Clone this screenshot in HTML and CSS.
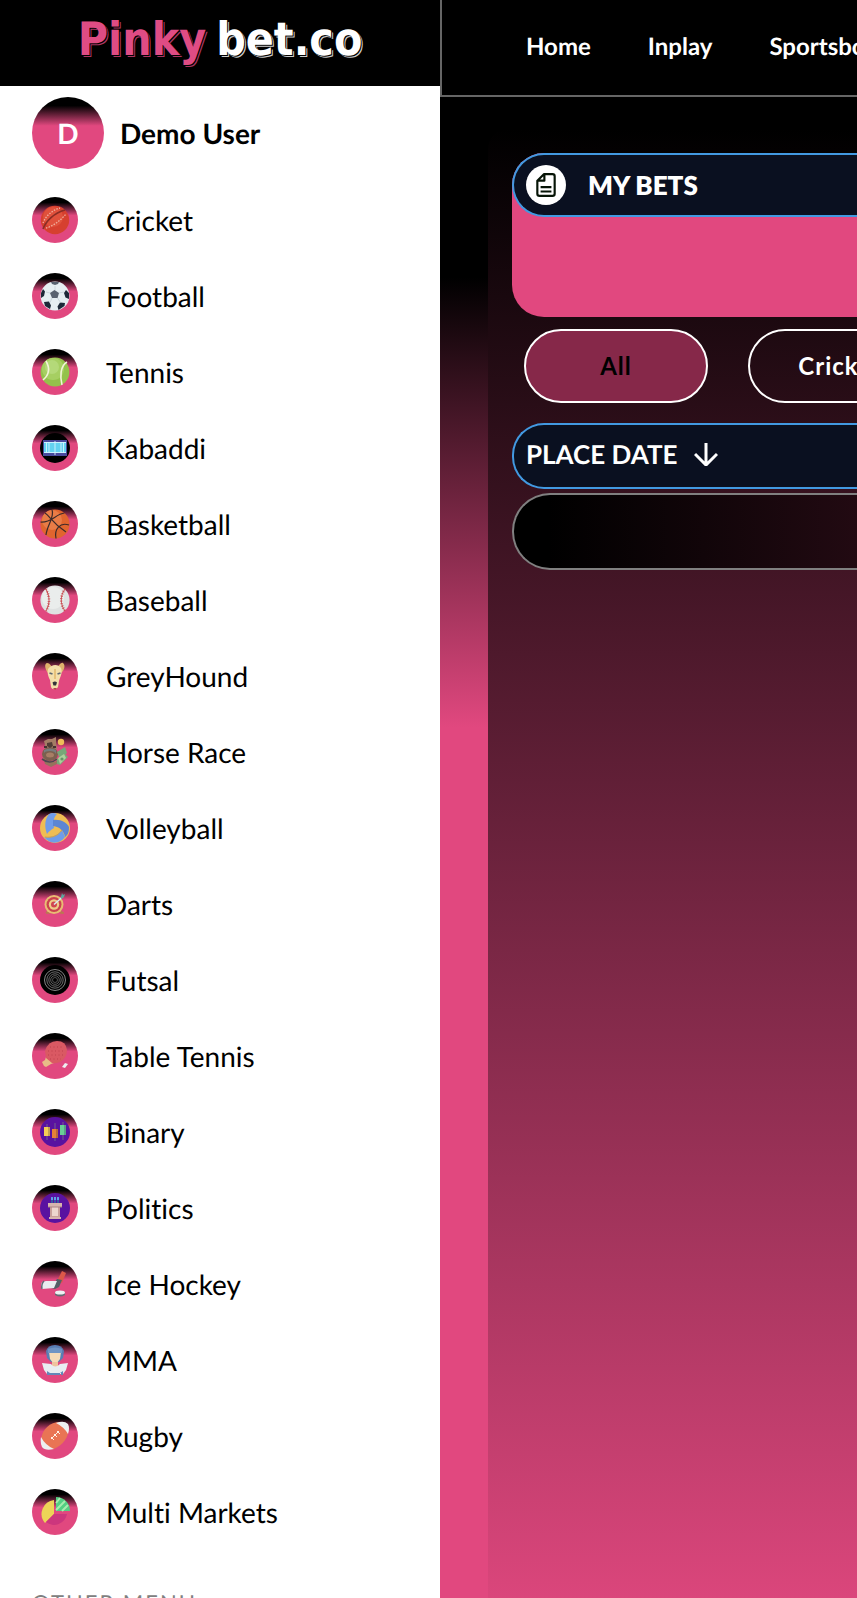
FILE: index.html
```html
<!DOCTYPE html>
<html lang="en">
<head>
<meta charset="utf-8">
<meta name="viewport" content="width=device-width, initial-scale=1">
<title>Pinkybet.co</title>
<link rel="stylesheet" href="styles.css">
</head>
<body>
<div class="app">
  <aside class="sidebar">
    <a class="logo" href="#"><span class="logo-pink">Pinky</span><span class="logo-white">bet.co</span></a>
    <div class="user">
      <span class="avatar">D</span>
      <span class="user-name">Demo User</span>
    </div>
    <nav class="sports" aria-label="Sports">
      <a class="sport" href="#"><span class="badge"><svg viewBox="0 0 30 30"><circle cx="15" cy="15" r="14.2" fill="#d6402f"/><circle cx="13" cy="12" r="10" fill="#e0513c"/><path d="M3 24C6 16 14 8 25 5" fill="none" stroke="#8a2d25" stroke-width="1.600"/><path d="M3 18C5 12 12 5 20 3M6 23C12 22 21 15 26 9" fill="none" stroke="#f0b0a0" stroke-width="1.300" stroke-dasharray="1.5 1.3"/></svg></span>Cricket</a>
      <a class="sport" href="#"><span class="badge"><svg viewBox="0 0 30 30"><circle cx="15" cy="15" r="14.4" fill="#e6eef2"/><path d="M14.500 9l4.500 3-1.500 5h-5.500l-2-5z" fill="#596270"/><path d="M11 1h8l-1 2-3 1-3-1z" fill="#596270"/><path d="M1 12l2-4 2 2.500-1 4.500-3 2zM29 12l-3-3-2 3 1.500 4.500 3.500 1.500zM4 21l5-.5 2 4-1 3.500-5-3zM25 22l-5-.5-2.500 4 1 3.500 6-4z" fill="#1d2838"/><path d="M15 5v4M19 12l5-1M17.500 17l3 4.500M12 17l-2 4.500M10 12l-4-1" stroke="#c5d0d8" stroke-width=".8"/></svg></span>Football</a>
      <a class="sport" href="#"><span class="badge"><svg viewBox="0 0 30 30"><circle cx="15" cy="15" r="14.4" fill="#94c24b"/><circle cx="13" cy="12" r="11" fill="#a6cf62"/><circle cx="12" cy="10" r="7" fill="#b4d979"/><path d="M6 4c4 7 3 14-3 19M27 5c-7 4-7 15-5 23" fill="none" stroke="#f2f4d8" stroke-width="1.600"/></svg></span>Tennis</a>
      <a class="sport" href="#"><span class="badge"><svg viewBox="0 0 30 30"><circle cx="15" cy="15" r="15"/><path d="M3 7h24v16H3z" fill="#4a4a9d"/><path d="M4 9h22v11H4z" fill="#63d2f0"/><path d="M4 9.500h22M4 19.500h22M15 8v14M6.500 9v11M9 9v11M21 9v11M23.500 9v11" stroke="#d5f5ff" stroke-width=".9"/></svg></span>Kabaddi</a>
      <a class="sport" href="#"><span class="badge"><svg viewBox="0 0 30 30"><circle cx="15" cy="15" r="14.600" fill="#e0652e"/><circle cx="12" cy="11" r="10" fill="#e97c46"/><path d="M.5 13c11 1 15-8 24-9M5 4c5 3 7 10 21 19M12 .8C15 8 7 16 6 26M29 16c-9-3-15 4-13 13.500" fill="none" stroke="#3c2a2a" stroke-width="1.200"/></svg></span>Basketball</a>
      <a class="sport" href="#"><span class="badge"><svg viewBox="0 0 30 30"><circle cx="15" cy="15" r="14.600" fill="#dfe2e2"/><circle cx="13" cy="13" r="11" fill="#eaedec"/><path d="M6 4c4 8 4 15 0 22M25 4c-5 7-5 15 0 22" fill="none" stroke="#c94a50" stroke-width="1"/><path d="M6 4c4 8 4 15 0 22M25 4c-5 7-5 15 0 22" fill="none" stroke="#c94a50" stroke-width="2.600" stroke-dasharray=".7 1.800"/></svg></span>Baseball</a>
      <a class="sport" href="#"><span class="badge"><svg viewBox="0 0 30 30"><path d="M8 12C5 8 4 3 7 2c3 0 4 3 5 4h6c1-2 3-5 5-4 3 2 1 8-2 10z" fill="#dfb36c"/><path d="M8 8c4-5 10-5 13-1 2 5-1 9-2 13l-1 6c-2 3-6 3-7 0l-1-7C8 15 7 12 8 8z" fill="#f3dfaa"/><path d="M14 8h2v10h-2z" fill="#e6c27b"/><path d="M9.500 12l3 1M20.500 12l-3 1" stroke="#5f6870" stroke-width="1.800"/><path d="M12.500 21.500q2.500-2 4.500 0l-1 3h-2.500z" fill="#343338"/><path d="M13 27h4l-2 2z" fill="#ae4b4b"/></svg></span>GreyHound</a>
      <a class="sport" href="#"><span class="badge"><svg viewBox="0 0 30 30"><path d="M4 4l4-2 4 0 4-2v5l1 7-4 3H6l-1-7z" fill="#a47d65"/><ellipse cx="10" cy="17" rx="8" ry="7" fill="#7b604f"/><path d="M3 20l5 5h7l4-4-2 6-6 3-6-3z" fill="#96735d"/><path d="M7 6l5-1 1 4-3 2-3-2z" fill="#513c35"/><path d="M4 13q6-3 12 0v4q-1-3-6-3t-6 2z" fill="#777c7e"/><path d="M2 22q8 6 15 0" fill="none" stroke="#4d4650" stroke-width="1.600"/><ellipse cx="10" cy="18" rx="4" ry="2.500" fill="#a87e65"/><path d="M4 10h3M13 10h3" stroke="#443331" stroke-width="2"/><circle cx="21" cy="5" r="3.200" fill="#efbd58"/><path d="M17 15l8-5 2 6-7 6zM17 22l7-6 4 4-8 8-3-1z" fill="#77a878"/><path d="M18 21l6-4 2 4-6 6z" fill="#add09c"/><circle cx="22" cy="22" r="1.600" fill="#669568"/></svg></span>Horse Race</a>
      <a class="sport" href="#"><span class="badge"><svg viewBox="0 0 30 30"><circle cx="15" cy="15" r="15" fill="#efbd54"/><path d="M9 1Q13-1 17 1c-4 4-4 9-3 14-3 2-5 3-7 6C4 13 5 6 9 1z" fill="#6f9cea"/><path d="M13 7c8-1 14 3 16 7 0 5-1 8-4 10-1-6-5-10-12-11z" fill="#5c86d3"/><path d="M4 24c8 1 14-2 18-7l3 7c-5 7-15 8-21 0z" fill="#6f9cea"/><path d="M22 17c-4 6-10 8-17 7" fill="none" stroke="#d4a244"/></svg></span>Volleyball</a>
      <a class="sport" href="#"><span class="badge"><svg viewBox="0 0 30 30"><path d="M8 22l-2 2M21 22l2 2M6 24h4M20 24h4" stroke="#b87a50" stroke-width="1.500"/><circle cx="14" cy="15.500" r="9.500" fill="#e8bc73"/><circle cx="14" cy="15.500" r="7.500" fill="#ca414e"/><circle cx="14" cy="15.500" r="5.200" fill="#eecb88"/><circle cx="14" cy="15.500" r="3" fill="#cf4550"/><path d="M14 15.500l9-8" stroke="#d9edf0" stroke-width="1.500"/><path d="M21 8l1-4 1 2 2-1-1 3-3 2z" fill="#59a79c"/></svg></span>Darts</a>
      <a class="sport" href="#"><span class="badge"><svg viewBox="0 0 30 30"><circle cx="15" cy="15" r="15"/><g fill="none" stroke="#858585"><circle cx="15" cy="15" r="10.500"/><circle cx="15" cy="15" r="8.200" stroke-width=".8"/><circle cx="15" cy="15" r="6.200" stroke-width=".8"/><circle cx="15" cy="15" r="4.300" stroke-width=".7"/><circle cx="15" cy="15" r="2.500" stroke-width=".6"/></g></svg></span>Futsal</a>
      <a class="sport" href="#"><span class="badge"><svg viewBox="0 0 30 30"><path d="M6 16l8 6-3 1-5 3-2-1-2-4 3-2z" fill="#e8bc87"/><path d="M6 17L5 10Q8 0 17 0q9 0 10 9 0 8-7 12-5 2-8 1z" fill="#da5963"/><g stroke="#be424e" stroke-width="1" stroke-dasharray="1 2.500"><path d="M10 6h13M8 10h17M8 14h17M10 18h11"/></g><path d="M22 26l3-4 3 1-3 4z" fill="#eceff1"/></svg></span>Table Tennis</a>
      <a class="sport" href="#"><span class="badge"><svg viewBox="0 0 30 30"><circle cx="15" cy="15" r="15" fill="#5912a0"/><path d="M7 7v16M15 6v18M23 5v18" stroke="#77608c" stroke-width="1"/><path d="M4 10h6v9H4z" fill="#f4ce55"/><path d="M12 12h6v9h-6z" fill="#e68238"/><path d="M20 8h6v10h-6z" fill="#69cf97"/><path d="M9 10v9M17 12v9M25 8v10" stroke="#2b174c" stroke-opacity=".25" stroke-width="2"/></svg></span>Binary</a>
      <a class="sport" href="#"><span class="badge"><svg viewBox="0 0 30 30"><circle cx="15" cy="15" r="15" fill="#5912a0"/><path d="M12 5v6M15 4v7M18 5v6" stroke="#248aa3" stroke-width="1.200"/><path d="M12 4v3M15 4v3M18 4v3" stroke="#67baff" stroke-width="1.500"/><path d="M8 10h14v4H8zM9 24h12v2H9z" fill="#d7b5ad"/><path d="M10 14h10v10H10z" fill="#c9a09b"/><path d="M12 14h6v9h-6z" fill="#edd6ce"/><path d="M8 14h14" stroke="#a98084"/></svg></span>Politics</a>
      <a class="sport" href="#"><span class="badge"><svg viewBox="0 0 30 30"><path d="M22 2l4 2-4 10-5-2z" fill="#dc5849"/><path d="M17 10l5 1-3 7-4 2-4-1z" fill="#555e66"/><path d="M2 13q-2 4 0 7l12-1 3-7H6z" fill="#e9edf0"/><path d="M4 12q-3 3-2 8" fill="none" stroke="#626973" stroke-width="1.500"/><path d="M15 23v3q5 3 10 0v-3z" fill="#626b72"/><ellipse cx="20" cy="23.500" rx="5" ry="2" fill="#eef1f3"/></svg></span>Ice Hockey</a>
      <a class="sport" href="#"><span class="badge"><svg viewBox="0 0 30 30"><path d="M6 6Q8 0 15 0t9 6l-1 7-4 4h-8l-4-4z" fill="#587eb3"/><path d="M9 7h12l-1 7-3 4h-4l-3-4z" fill="#f6dab7"/><path d="M8 4q7-3 14 0v4H8z" fill="#6f94c4"/><path d="M12 17h6v5h-6z" fill="#eec39f"/><path d="M2 18l9 1q4 5 9 0l8-1-2 7-3 4H7l-3-4z" fill="#e8edf1"/><path d="M7 26l3 2v2H7zM23 26l-3 2v2h3zM9 28h12v2H9z" fill="#6388b9"/></svg></span>MMA</a>
      <a class="sport" href="#"><span class="badge"><svg viewBox="0 0 30 30"><path d="M1 19C2 8 10 1 20 1q5 0 9 5c0 10-6 18-15 22-6 1-10-2-13-5z" fill="#e97454"/><path d="M16 2q8-3 12 1 2 4 0 10-4-7-12-11zM1 16q4 8 13 12-9 2-12-2-2-4-1-10z" fill="#edf0f1"/><path d="M11 18l8-8M11 16l3 3M14 13l3 3M17 10l3 3" stroke="#fff1e5" stroke-width="1"/></svg></span>Rugby</a>
      <a class="sport" href="#"><span class="badge"><svg viewBox="0 0 30 30"><path d="M14 3v14L5 26A14 14 0 0 1 14 3z" fill="#edd357"/><path d="M14 17h13A13 13 0 0 1 6 25z" fill="#cc367d"/><path d="M16 0v14h14A14 14 0 0 0 16 0z" fill="#53cf83"/><path d="M16 6l4-5M16 13l9-9M22 14l6-6" stroke="#a7ecaf" stroke-width="2"/></svg></span>Multi Markets</a>
    </nav>
    <h2 class="menu-title">OTHER MENU</h2>
  </aside>

  <div class="page">
    <header class="topbar">
      <nav class="topnav" aria-label="Main">
        <a href="#">Home</a><a href="#">Inplay</a><a href="#">Sportsbook</a>
      </nav>
    </header>
    <main class="content">
      <section class="panel">
        <div class="bets-card">
          <div class="bar bets-head">
            <span class="bets-icon"><svg viewBox="0 0 24 24" fill="none" stroke="#061406" stroke-width="2" stroke-linejoin="round"><path d="M10 2H18a2 2 0 0 1 2 2v16a2 2 0 0 1-2 2H6a2 2 0 0 1-2-2V8zM10.500 2v6H4M7 14h10M7 18h10"/></svg></span>
            <h1>MY BETS</h1>
          </div>
        </div>
        <div class="filters">
          <button class="pill active" type="button">All</button>
          <button class="pill" type="button">Cricket</button>
        </div>
        <div class="bar sort-bar">
          <button class="sort" type="button">PLACE DATE <svg viewBox="0 0 24 24" fill="none" stroke="#fff" stroke-width="3"><path d="M12 1v22M1 12l11 11 11-11"/></svg></button>
        </div>
        <div class="empty-row"></div>
      </section>
    </main>
  </div>
</div>
</body>
</html>
```
FILE: styles.css
```css
:root {
  --pink: #e1487f;
  --navy: #0a1020;
  --blue: #4299e1;
  --fade: linear-gradient(180deg, #000 12%, var(--pink) 40%);
}

* { box-sizing: border-box; }

body {
  margin: 0;
  font-family: Lato, "Open Sans", sans-serif;
  font-variant-ligatures: none;
  text-rendering: geometricPrecision;
  color: #000;
  background: #fff;
}

a { color: inherit; text-decoration: none; }

.app {
  display: flex;
  height: 100vh;
  overflow: hidden;
}

.sidebar {
  flex: 0 0 440px;
  overflow: hidden;
  background: #fff;
}

.logo {
  display: flex;
  justify-content: center;
  align-items: center;
  gap: 10px;
  height: 86px;
  padding-bottom: 8px;
  background: #000;
  font: bold 46px/1 "DejaVu Sans Condensed", sans-serif;
}

.logo-pink {
  color: #df4c84;
  text-shadow: 1px 1px #000, 2px 2px #a93662;
}

.logo-white {
  color: #fff;
  text-shadow: 1px 1px #000, 2px 2px #ccc;
}

.user {
  display: flex;
  align-items: center;
  gap: 16px;
  padding: 11px 32px 28px;
}

.avatar {
  display: flex;
  justify-content: center;
  align-items: center;
  width: 72px;
  height: 72px;
  border-radius: 50%;
  background: var(--fade);
  color: #fff;
  font-size: 28px;
  font-weight: 700;
}

.user-name {
  font-size: 28px;
  font-weight: 700;
}

.sports {
  display: flex;
  flex-direction: column;
  gap: 30px;
  padding: 0 32px;
}

.sport {
  display: flex;
  align-items: center;
  gap: 28px;
  height: 46px;
  font-size: 28px;
}

.badge {
  flex: none;
  padding: 8px;
  width: 46px;
  height: 46px;
  border-radius: 50%;
  background: var(--fade);
}

.badge svg { display: block; }

.menu-title {
  margin: 52px 32px 0;
  color: #808080;
  font-size: 22px;
  font-weight: 400;
  line-height: 32px;
  letter-spacing: 2px;
}

.page {
  flex: 1;
  min-width: 0;
  display: flex;
  flex-direction: column;
  overflow: hidden;
  background: #000;
}

.topbar {
  flex: none;
  height: 97px;
  border-left: 2px solid #666;
  border-bottom: 2px solid #666;
  background: #000;
}

.topnav {
  display: flex;
  align-items: center;
  gap: 57px;
  height: 92px;
  padding-left: 84px;
  color: #fff;
  font-size: 24px;
  font-weight: 700;
}

.content {
  flex: 1;
  padding: 32px 0 0 48px;
  background: linear-gradient(180deg, #000 12%, var(--pink) 42%);
}

.panel {
  height: 100%;
  padding: 24px 0 0 24px;
  border-top-left-radius: 20px;
  background: linear-gradient(180deg, #000, var(--pink) 103%);
}

.bar {
  border: 2px solid var(--blue);
  border-right: 0;
  border-radius: 32px 0 0 32px;
  background: var(--navy);
  color: #fff;
}

.bets-card {
  height: 164px;
  border-radius: 32px 0 0 32px;
  background: var(--pink);
}

.bets-head {
  display: flex;
  align-items: center;
  gap: 22px;
  height: 64px;
  padding-left: 12px;
}

.bets-head h1 {
  margin: 0;
  font-size: 26px;
  font-weight: 800;
}

.bets-icon {
  display: flex;
  justify-content: center;
  align-items: center;
  width: 40px;
  height: 40px;
  border-radius: 50%;
  background: #fff;
}

.bets-icon svg {
  width: 26px;
  height: 26px;
}

.filters {
  display: flex;
  gap: 40px;
  padding: 12px 0 20px 12px;
}

.pill {
  flex: none;
  width: 184px;
  height: 74px;
  padding: 0 0 2px;
  border: 2px solid #fff;
  border-radius: 37px;
  background: transparent;
  color: #fff;
  font: 700 24px Lato, sans-serif;
  letter-spacing: 1px;
}

.pill.active {
  background: #862849;
  color: #000;
}

.sort-bar {
  display: flex;
  align-items: center;
  height: 66px;
  padding-left: 12px;
}

.sort {
  display: flex;
  align-items: center;
  gap: 16px;
  padding: 0 0 4px;
  border: 0;
  background: none;
  color: #fff;
  font: 700 26px/28px Lato, sans-serif;
  text-rendering: inherit;
}

.sort svg {
  width: 24px;
  height: 24px;
}

.empty-row {
  height: 77px;
  margin-top: 4px;
  border: 2px solid #808080;
  border-right: 0;
  border-radius: 38px 0 0 38px;
  background: linear-gradient(90deg, #000 10%, #220a12);
}
```
